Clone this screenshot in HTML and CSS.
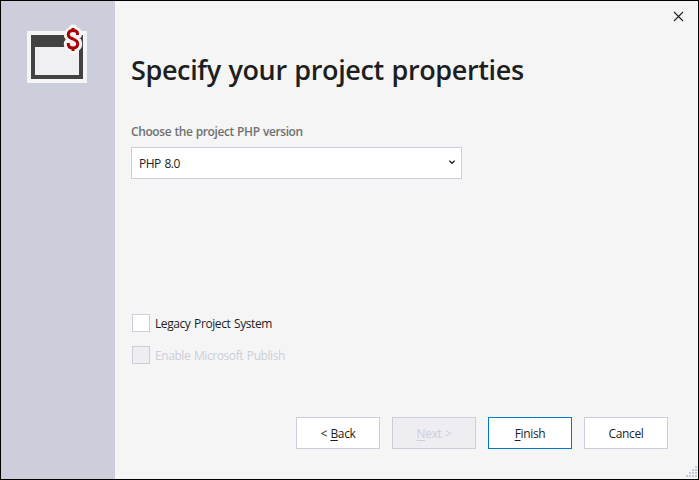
FILE: index.html
```html
<!DOCTYPE html>
<html lang="en">
<head>
<meta charset="utf-8">
<title>Specify your project properties</title>
<link rel="stylesheet" href="styles.css">
</head>
<body>
<div class="window">
  <aside class="sidebar">
    <svg class="logo" width="60" height="60" viewBox="0 0 60 60">
      <path fill="#f5f5f5" d="M0 7h60v52H0z"/>
      <path fill="#424242" d="M4 11h52v44H4z"/>
      <path fill="#f0eff1" d="M8 23h44v28H8z"/>
      <path class="halo" d="M50.500 10.500V9.800C50.500 8 49 7.300 46 7.300C42.800 7.300 41.300 8.600 41.300 10.700C41.300 15.800 50.700 14 50.700 19.800C50.700 22.400 49 23.600 46 23.600C42.800 23.600 41.300 22.600 41.300 20V19.400M46 5V7M46 24V26"/>
      <path class="dollar" d="M50.500 11V10C50.500 7.600 49 6.600 46 6.600C42.800 6.600 41.300 8 41.300 10.700C41.300 15.800 50.700 14 50.700 19.800C50.700 22.600 49 24 46 24C42.800 24 41.300 22.800 41.300 20V19M46 4V7M46 24V27"/>
    </svg>
  </aside>
  <main class="content">
    <button class="close" aria-label="Close"><svg width="11" height="11" viewBox="0 0 11 11"><path d="M1 1l9 9M10 1l-9 9"/></svg></button>
    <h1 class="title">Specify your project properties</h1>
    <label class="label">Choose the project PHP version</label>
    <div class="select"><span>PHP 8.0</span><svg width="6" height="5" viewBox="0 0 6 5"><path d="M.3 .7L3 3.300L5.700 .7"/></svg></div>
    <div class="checks">
      <div class="check"><i class="box"></i><span>Legacy Project System</span></div>
      <div class="check disabled"><i class="box"></i><span>Enable Microsoft Publish</span></div>
    </div>
    <footer class="buttons">
      <button class="btn"><span>&lt; <u>B</u>ack</span></button>
      <button class="btn off" disabled><span><u>N</u>ext &gt;</span></button>
      <button class="btn primary"><span><u>F</u>inish</span></button>
      <button class="btn"><span>Cancel</span></button>
    </footer>
  </main>
  <svg class="grip" width="12" height="12" viewBox="0 0 12 12">
    <path d="M10 0h2v2h-2zM10 3h2v2h-2zM7 3h2v2h-2zM10 6h2v2h-2zM7 6h2v2h-2zM4 6h2v2h-2zM10 9h2v2h-2zM7 9h2v2h-2zM4 9h2v2h-2zM1 9h2v2h-2z"/>
  </svg>
</div>
</body>
</html>
```
FILE: styles.css
```css
* { box-sizing: border-box; }
body { margin: 0; font: 12px/16px "Open Sans", "Noto Sans", sans-serif; color: #1e1e1e; }
.window { position: relative; display: flex; width: 699px; height: 480px; border: 1px solid #000; background: #f5f5f5; overflow: hidden; }
.sidebar { width: 114px; background: #cccedb; padding: 23px 0 0 26px; }
.logo { display: block; }
.halo, .dollar { fill: none; stroke-linejoin: round; }
.halo { stroke: #f5f5f5; stroke-width: 9; stroke-linecap: round; }
.dollar { stroke: #aa0000; stroke-width: 3; }
.content { flex: 1; display: flex; flex-direction: column; align-items: flex-start; padding: 10px 30px 30px 16px; }
.close { align-self: flex-end; margin-right: -16px; width: 11px; height: 11px; padding: 0; border: 0; background: none; }
.close svg { display: block; fill: none; stroke: #1e1e1e; stroke-width: 1.1; }
.title { margin: 28px 0 0; font-size: 27px; line-height: 40px; font-weight: 560; letter-spacing: -0.37px; word-spacing: 1px; white-space: nowrap; }
.label { margin-top: 34px; font-weight: 600; color: #717171; letter-spacing: -0.4px; word-spacing: 0.5px; }
.select { display: flex; align-items: center; justify-content: space-between; width: 331px; height: 32px; margin-top: 7px; padding: 0 6px 0 7px; border: 1px solid #cccedb; background: #fff; letter-spacing: -0.5px; word-spacing: 1px; }
.select span { padding-top: 2px; }
.select svg { margin-bottom: 2px; fill: none; stroke: #1e1e1e; stroke-width: 1.3; }
.checks { margin: 135px 0 0 1px; display: grid; gap: 14px; }
.check { display: flex; align-items: center; gap: 5px; height: 18px; letter-spacing: -0.42px; word-spacing: 1px; }
.check span { padding-top: 2px; }
.box { width: 18px; height: 18px; border: 1px solid #cccedb; background: #fff; }
.disabled { color: #cccedb; }
.disabled .box { background: #eeeef2; }
.buttons { display: flex; gap: 12px; align-self: flex-end; margin-top: auto; }
.btn { width: 84px; height: 32px; padding: 1px 0 0; border: 1px solid #cccedb; background: #fff; font: inherit; color: #1e1e1e; letter-spacing: -0.35px; word-spacing: 0.6px; }
.off { background: #eeeef2; color: #cccedb; }
.primary { border-color: #007acc; }
u { text-decoration-thickness: 1px; text-underline-offset: 2px; }
.grip { position: absolute; right: 1px; bottom: 1px; fill: #c3c9d6; }
```
